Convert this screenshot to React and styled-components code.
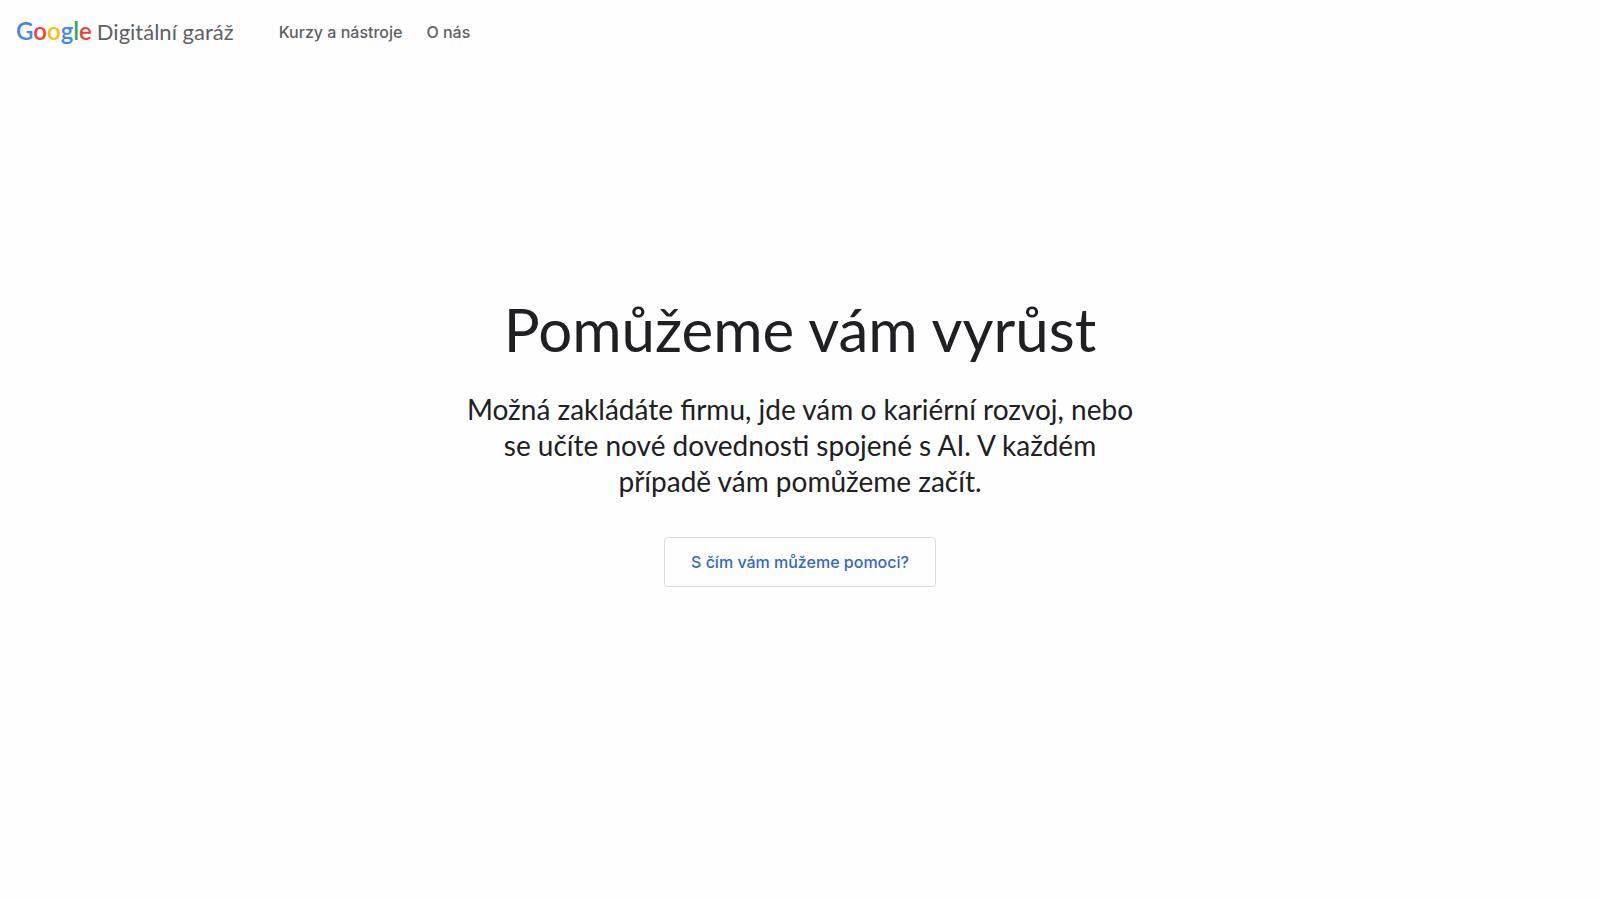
import React from 'react';
import styled, { createGlobalStyle } from 'styled-components';

const GlobalStyle = createGlobalStyle`
    body {
        margin: 0;
        background: #fefefe;
        color: #202024;
        font-family: Lato, "Open Sans", sans-serif;
    }
`

const Header = styled.header`
    display: flex;
    align-items: center;
    height: 63px;
    padding: 0 16px;
`

const Brand = styled.a`
    display: flex;
    align-items: baseline;
    gap: 5px;
    margin-right: 33px;
    color: #5f6064;
    font-size: 22px;
    line-height: 32px;
    text-decoration: none;
`

const Logo = styled.span`
    font-size: 24px;
    font-weight: 600;
`

const LogoLetter = styled.span`
    color: ${(props) => props.$color};
`

const Nav = styled.nav`
    display: flex;
`

const NavLink = styled.a`
    padding: 0 12px;
    color: #5f6064;
    font-family: Inter, sans-serif;
    font-size: 16px;
    font-weight: 500;
    line-height: 24px;
    text-decoration: none;
`

const Hero = styled.main`
    display: flex;
    flex-direction: column;
    align-items: center;
    padding: 230px 24px 64px;
    text-align: center;
`

const Title = styled.h1`
    margin: 0;
    font-size: 60px;
    font-weight: 400;
    line-height: 72px;
`

const Intro = styled.p`
    max-width: 684px;
    margin: 26px 0 38px;
    font-size: 28px;
    line-height: 36px;
`

const HelpButton = styled.button`
    padding: 12px 26px;
    border: 1px solid #dadce0;
    border-radius: 4px;
    background: transparent;
    color: #3269c4;
    font-family: Inter, sans-serif;
    font-size: 16px;
    font-weight: 500;
    line-height: 24px;
    cursor: pointer;
`

const logoLetters = [
    ['G', '#4285f4'],
    ['o', '#ea4335'],
    ['o', '#fbbc04'],
    ['g', '#4285f4'],
    ['l', '#34a853'],
    ['e', '#ea4335'],
]

const App = () => {
    return (
        <>
            <GlobalStyle />
            <Header>
                <Brand href="#">
                    <Logo>
                        {logoLetters.map(([letter, color], index) => (
                            <LogoLetter key={index} $color={color}>{letter}</LogoLetter>
                        ))}
                    </Logo>
                    <span>Digitální garáž</span>
                </Brand>
                <Nav>
                    <NavLink href="#kurzy">Kurzy a nástroje</NavLink>
                    <NavLink href="#o-nas">O nás</NavLink>
                </Nav>
            </Header>
            <Hero>
                <Title>Pomůžeme vám vyrůst</Title>
                <Intro>
                    Možná zakládáte firmu, jde vám o kariérní rozvoj, nebo se učíte nové dovednosti spojené s AI. V každém případě vám pomůžeme začít.
                </Intro>
                <HelpButton type="button">S čím vám můžeme pomoci?</HelpButton>
            </Hero>
        </>
    )
}

export default App;
